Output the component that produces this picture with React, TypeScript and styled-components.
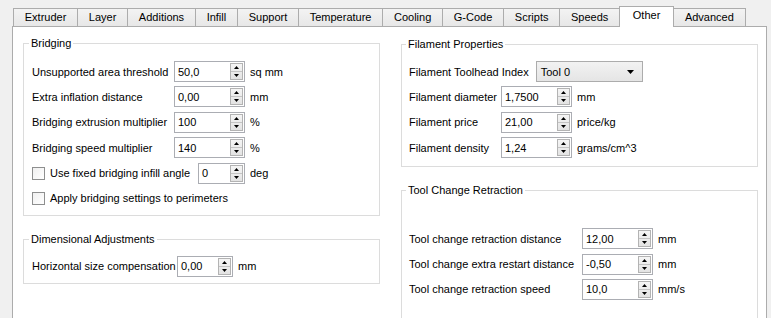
import styled, { createGlobalStyle } from "styled-components";

const GlobalStyle = createGlobalStyle`
  html, body {
    margin: 0;
    padding: 0;
    background: #f0f0f0;
    overflow: hidden;
  }
  body {
    font-family: "Liberation Sans", Arial, sans-serif;
    font-size: 11px;
    color: #000;
  }
  #root {
    width: 771px;
    height: 318px;
    overflow: hidden;
  }
`;

const Window = styled.div`
  padding: 6px 4px 0 12px;
`;

const TabBar = styled.div`
  display: flex;
  align-items: flex-end;
  height: 20px;
  padding-left: 1px;
  position: relative;
  z-index: 1;
`;

const Tab = styled.div<{ $active?: boolean }>`
  box-sizing: border-box;
  height: ${(p) => (p.$active ? 21 : 18)}px;
  margin-bottom: ${(p) => (p.$active ? -1 : 0)}px;
  margin-left: -1px;
  padding: 0 ${(p) => (p.$active ? 12.8 : 10.75)}px;
  border: 1px solid #acacac;
  border-bottom: none;
  background: ${(p) => (p.$active ? "#fff" : "linear-gradient(#f3f3f3, #e7e7e7)")};
  line-height: 17px;
  white-space: nowrap;

  &:first-child {
    margin-left: 0;
  }
`;

const Pane = styled.div`
  box-sizing: border-box;
  height: 310px;
  background: #fff;
  border: 1px solid #acacac;
  padding: 10px 0 0 10px;
  display: grid;
  grid-template-columns: 357px 357px;
  column-gap: 21px;
  align-items: start;
`;

const Column = styled.div<{ $offset?: number }>`
  display: flex;
  flex-direction: column;
  gap: 17px;
  margin-top: ${(p) => p.$offset || 0}px;
`;

const Group = styled.fieldset<{ $pad: string }>`
  margin: 0;
  min-width: 0;
  border: 1px solid #dcdcdc;
  padding: ${(p) => p.$pad};
`;

const Legend = styled.legend`
  margin-left: -3px;
  padding: 0 2px;
  line-height: 13px;
`;

const Form = styled.div<{ $cols: string }>`
  display: grid;
  grid-template-columns: ${(p) => p.$cols};
  grid-auto-rows: 21px;
  row-gap: 4.4px;
  align-items: center;
`;

const Label = styled.span`
  white-space: nowrap;
`;

const Unit = styled.span`
  padding-left: 5px;
  white-space: nowrap;
`;

const SpinBox = styled.div<{ $w: number }>`
  box-sizing: border-box;
  width: ${(p) => p.$w}px;
  height: 21px;
  border: 1px solid #abadb3;
  background: #fff;
  display: flex;
  align-items: center;
  padding-left: 3px;
`;

const SpinButtons = styled.div`
  box-sizing: border-box;
  margin-left: auto;
  margin-right: 1px;
  width: 13px;
  height: 17px;
  border: 1px solid #b3b3b3;
  background: linear-gradient(#f5f5f5, #e3e3e3);
  display: flex;
  flex-direction: column;
`;

const SpinHalf = styled.div<{ $down?: boolean }>`
  flex: 1;
  display: flex;
  align-items: center;
  justify-content: center;
  border-top: ${(p) => (p.$down ? "1px solid #c4c4c4" : "none")};
`;

const CheckRow = styled.div`
  grid-column: 1 / span 2;
  display: flex;
  align-items: center;
  gap: 5px;
`;

const CheckBox = styled.span`
  box-sizing: border-box;
  width: 13px;
  height: 13px;
  border: 1px solid #8e8f8f;
  background: linear-gradient(135deg, #f0f0f0, #ffffff);
`;

const Pushed = styled.div`
  margin-left: auto;
`;

const ComboRow = styled.div`
  grid-column: 1 / -1;
  display: flex;
  align-items: center;
  gap: 7px;
`;

const Combo = styled.div`
  box-sizing: border-box;
  width: 107px;
  height: 21px;
  border: 1px solid #acacac;
  background: linear-gradient(#f2f2f2, #e5e5e5);
  display: flex;
  align-items: center;
  justify-content: space-between;
  padding: 0 8px 0 4px;
`;

const Arrow = ({ down }: { down?: boolean }) => (
  <svg width="5" height="3" viewBox="0 0 5 3">
    <polygon points={down ? "0,0 5,0 2.5,3" : "0,3 5,3 2.5,0"} fill="#000" />
  </svg>
);

const Spin = ({ value, w }: { value: string; w: number }) => (
  <SpinBox $w={w}>
    <span>{value}</span>
    <SpinButtons>
      <SpinHalf>
        <Arrow />
      </SpinHalf>
      <SpinHalf $down>
        <Arrow down />
      </SpinHalf>
    </SpinButtons>
  </SpinBox>
);

type Row = { label: string; value: string; unit: string };

const tabs = [
  "Extruder",
  "Layer",
  "Additions",
  "Infill",
  "Support",
  "Temperature",
  "Cooling",
  "G-Code",
  "Scripts",
  "Speeds",
  "Other",
  "Advanced",
];

const bridging: Row[] = [
  { label: "Unsupported area threshold", value: "50,0", unit: "sq mm" },
  { label: "Extra inflation distance", value: "0,00", unit: "mm" },
  { label: "Bridging extrusion multiplier", value: "100", unit: "%" },
  { label: "Bridging speed multiplier", value: "140", unit: "%" },
];

const filament: Row[] = [
  { label: "Filament diameter", value: "1,7500", unit: "mm" },
  { label: "Filament price", value: "21,00", unit: "price/kg" },
  { label: "Filament density", value: "1,24", unit: "grams/cm^3" },
];

const toolChange: Row[] = [
  { label: "Tool change retraction distance", value: "12,00", unit: "mm" },
  { label: "Tool change extra restart distance", value: "-0,50", unit: "mm" },
  { label: "Tool change retraction speed", value: "10,0", unit: "mm/s" },
];

const renderRows = (rows: Row[], w: number) =>
  rows.map((r) => [
    <Label key={r.label}>{r.label}</Label>,
    <Spin key={r.label + "-v"} value={r.value} w={w} />,
    <Unit key={r.label + "-u"}>{r.unit}</Unit>,
  ]);

const App = () => {
  return (
    <>
      <GlobalStyle />
      <Window>
        <TabBar>
          {tabs.map((t) => (
            <Tab key={t} $active={t === "Other"}>
              {t}
            </Tab>
          ))}
        </TabBar>
        <Pane>
          <Column>
            <Group $pad="11px 8px 6px 8px">
              <Legend>Bridging</Legend>
              <Form $cols="142px 71px auto">
                {renderRows(bridging, 71)}
                <CheckRow>
                  <CheckBox />
                  <Label>Use fixed bridging infill angle</Label>
                  <Pushed>
                    <Spin value="0" w={47} />
                  </Pushed>
                </CheckRow>
                <Unit>deg</Unit>
                <CheckRow>
                  <CheckBox />
                  <Label>Apply bridging settings to perimeters</Label>
                </CheckRow>
              </Form>
            </Group>
            <Group $pad="10px 8px 6px 8px">
              <Legend>Dimensional Adjustments</Legend>
              <Form $cols="145px 56px auto">
                {renderRows([{ label: "Horizontal size compensation", value: "0,00", unit: "mm" }], 56)}
              </Form>
            </Group>
          </Column>
          <Column $offset={1}>
            <Group $pad="10px 7px 8px 7px">
              <Legend>Filament Properties</Legend>
              <Form $cols="92px 71px auto">
                <ComboRow>
                  <Label>Filament Toolhead Index</Label>
                  <Combo>
                    <span>Tool 0</span>
                    <svg width="7" height="4" viewBox="0 0 7 4">
                      <polygon points="0,0 7,0 3.5,4" fill="#000" />
                    </svg>
                  </Combo>
                </ComboRow>
                {renderRows(filament, 71)}
              </Form>
            </Group>
            <Group $pad="31px 7px 30px 7px">
              <Legend>Tool Change Retraction</Legend>
              <Form $cols="173px 71px auto">{renderRows(toolChange, 71)}</Form>
            </Group>
          </Column>
        </Pane>
      </Window>
    </>
  );
};

export default App;
